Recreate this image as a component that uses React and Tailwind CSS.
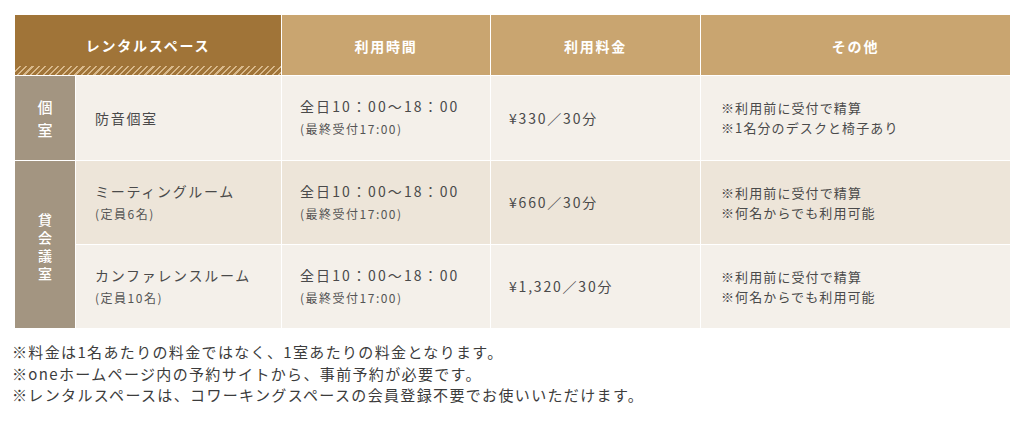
export default function App() {
  const font = { fontFamily: '"Noto Sans CJK JP", "Noto Sans", sans-serif' };
  const timeCell = (bg) => (
    <div className={`${bg} flex flex-col justify-center pl-[18px] text-[#4a4a4a]`}>
      <div className="text-[14px] leading-[22px] tracking-[2.1px]">全日10：00～18：00</div>
      <div className="text-[12px] leading-[24px] tracking-[1.5px] text-[#555]">(最終受付17:00)</div>
    </div>
  );
  const priceCell = (bg, text) => (
    <div className={`${bg} flex items-center pl-[18px] text-[14px] tracking-[1.8px] text-[#4a4a4a]`}>{text}</div>
  );
  const otherCell = (bg, a, b) => (
    <div className={`${bg} flex flex-col justify-center pl-[20px] text-[13px] leading-[20px] tracking-[1.1px] text-[#4a4a4a]`}>
      <div>{a}</div>
      <div>{b}</div>
    </div>
  );
  const nameCell = (bg, name, sub) => (
    <div className={`${bg} flex flex-col justify-center pl-[19px] text-[#4a4a4a]`}>
      <div className="text-[14px] leading-[22px] tracking-[1.7px]">{name}</div>
      {sub && <div className="text-[12px] leading-[24px] tracking-[1.5px] text-[#555]">{sub}</div>}
    </div>
  );
  const light = "bg-[#f4f0ea]";
  const dark = "bg-[#ede5d9]";
  return (
    <div className="min-h-[421px] w-[1024px] bg-white pl-[15px] pt-[15px]" style={font}>
      <div className="grid w-[995px] grid-cols-[60px_205px_208px_209px_309px] grid-rows-[60px_84px_83px_83px] gap-px bg-white">
        <div className="col-span-2 flex flex-col bg-[#a07438]">
          <div className="flex flex-1 items-center justify-center pt-[10px] text-[14px] font-bold tracking-[1.8px] text-white">
            レンタルスペース
          </div>
          <div className="h-[9px] bg-[repeating-linear-gradient(135deg,#a07438_0px,#a07438_3px,#d8b88a_3px,#d8b88a_4.5px)]"></div>
        </div>
        <div className="flex items-center justify-center bg-[#c9a570] pt-[2px] text-[14px] font-bold tracking-[1.8px] text-white">利用時間</div>
        <div className="flex items-center justify-center bg-[#c9a570] pt-[2px] text-[14px] font-bold tracking-[1.8px] text-white">利用料金</div>
        <div className="flex items-center justify-center bg-[#c9a570] pt-[2px] text-[14px] font-bold tracking-[1.8px] text-white">その他</div>

        <div className="flex flex-col items-center justify-center bg-[#a39581] text-[15px] font-medium leading-[23px] text-white">
          <div>個</div>
          <div>室</div>
        </div>
        {nameCell(light, "防音個室")}
        {timeCell(light)}
        {priceCell(light, "¥330／30分")}
        {otherCell(light, "※利用前に受付で精算", "※1名分のデスクと椅子あり")}

        <div className="row-span-2 flex flex-col items-center justify-center bg-[#a39581] pt-[2px] text-[14px] font-medium leading-[18px] text-white">
          <div>貸</div>
          <div>会</div>
          <div>議</div>
          <div>室</div>
        </div>
        {nameCell(dark, "ミーティングルーム", "(定員6名)")}
        {timeCell(dark)}
        {priceCell(dark, "¥660／30分")}
        {otherCell(dark, "※利用前に受付で精算", "※何名からでも利用可能")}

        {nameCell(light, "カンファレンスルーム", "(定員10名)")}
        {timeCell(light)}
        {priceCell(light, "¥1,320／30分")}
        {otherCell(light, "※利用前に受付で精算", "※何名からでも利用可能")}
      </div>
      <div className="-ml-[3px] mt-[13px] text-[15px] leading-[21.5px] tracking-[1.35px] text-[#3c3c3c]">
        <p>※料金は1名あたりの料金ではなく、1室あたりの料金となります。</p>
        <p>※oneホームページ内の予約サイトから、事前予約が必要です。</p>
        <p>※レンタルスペースは、コワーキングスペースの会員登録不要でお使いいただけます。</p>
      </div>
    </div>
  );
}
